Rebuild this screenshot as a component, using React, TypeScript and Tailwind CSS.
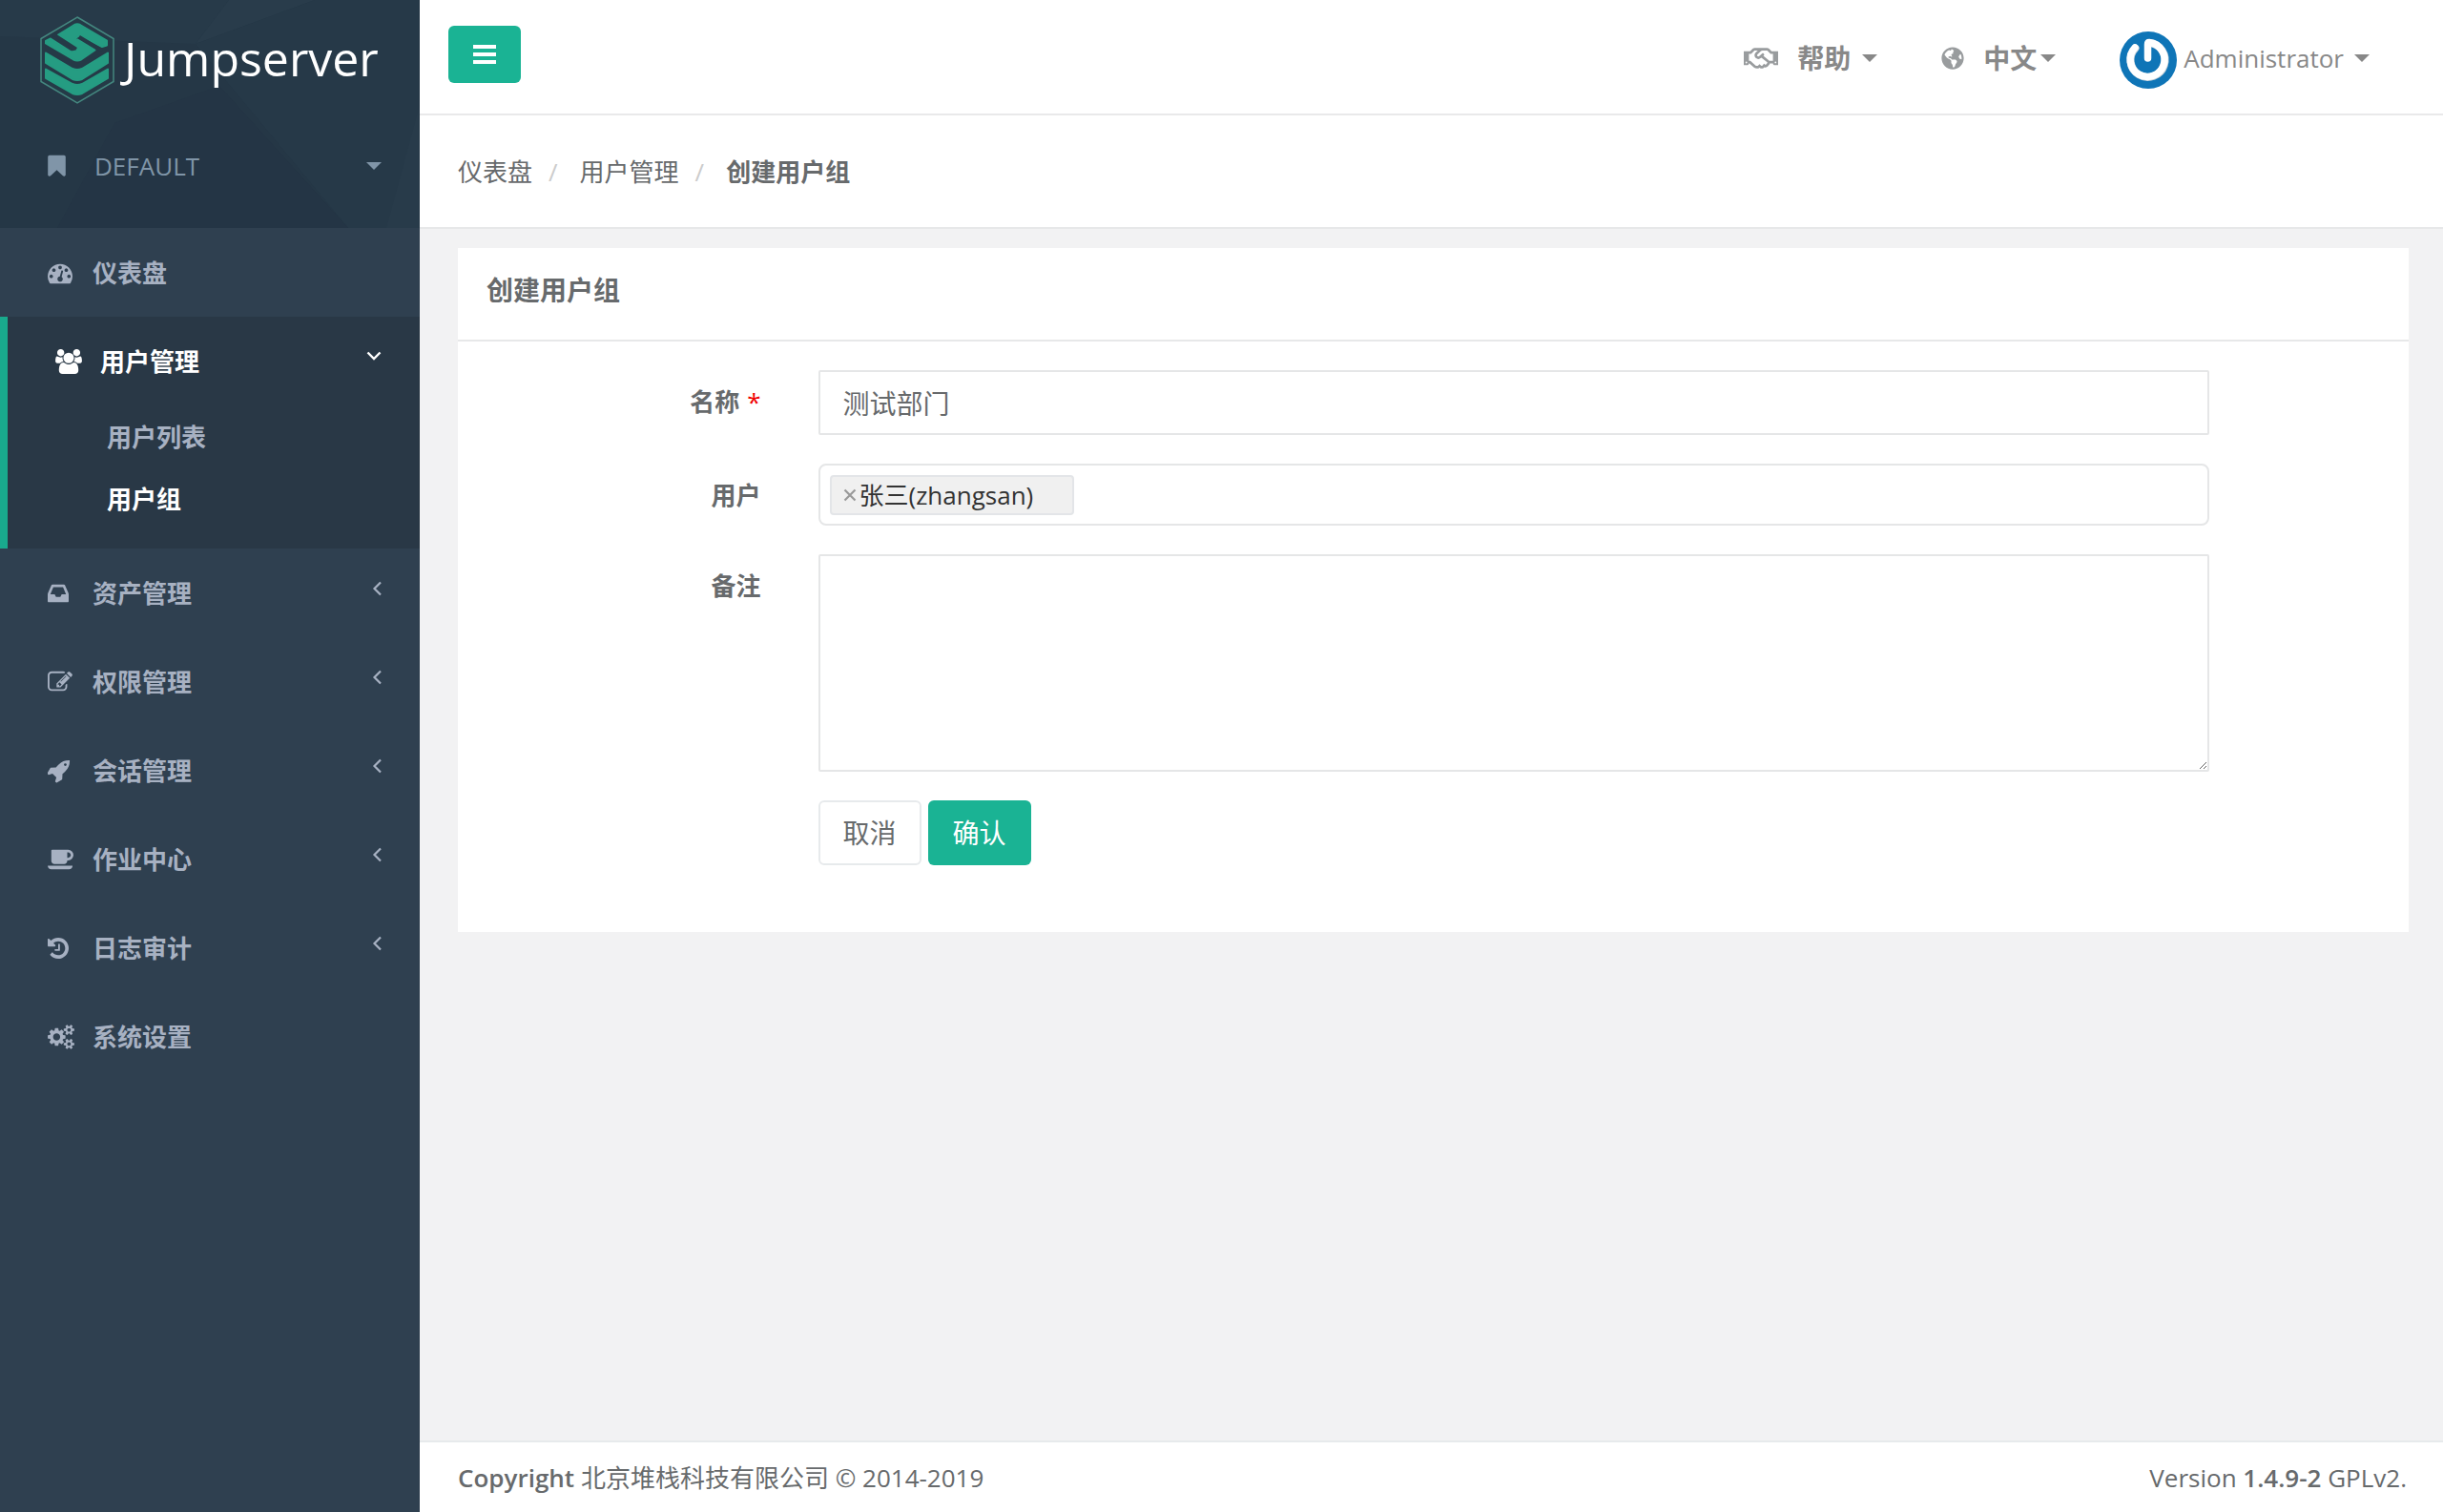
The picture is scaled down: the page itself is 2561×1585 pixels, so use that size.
import type { ReactNode } from "react";
import { FaGlobeAmericas, FaRegHandshake } from "react-icons/fa";

type Glyph = { box: string; width: string; d: string };

const bookmark: Glyph = {
  box: "256 0 1280 1792",
  width: "w-[19px]",
  d: "M1420 128q23 0 44 9 33 13 52.5 41t19.5 62v1289q0 34-19.5 62t-52.5 41q-19 8-44 8-48 0-83-32l-441-424-441 424q-36 33-83 33-23 0-44-9-33-13-52.5-41t-19.5-62v-1289q0-34 19.5-62t52.5-41q21-9 44-9h1048z",
};

const dashboard: Glyph = {
  box: "0 0 1792 1792",
  width: "w-[26px]",
  d: "M384 1152q0-53-37.5-90.5t-90.5-37.5-90.5 37.5-37.5 90.5 37.5 90.5 90.5 37.5 90.5-37.5 37.5-90.5zm192-448q0-53-37.5-90.5t-90.5-37.5-90.5 37.5-37.5 90.5 37.5 90.5 90.5 37.5 90.5-37.5 37.5-90.5zm428 481l101-382q6-26-7.5-48.5t-38.5-29.5-48 6.5-30 39.5l-101 382q-60 5-107 43.5t-63 98.5q-20 77 20 146t117 89 146-20 89-117q16-60-6-117t-72-91zm660-33q0-53-37.5-90.5t-90.5-37.5-90.5 37.5-37.5 90.5 37.5 90.5 90.5 37.5 90.5-37.5 37.5-90.5zm-640-640q0-53-37.5-90.5t-90.5-37.5-90.5 37.5-37.5 90.5 37.5 90.5 90.5 37.5 90.5-37.5 37.5-90.5zm448 192q0-53-37.5-90.5t-90.5-37.5-90.5 37.5-37.5 90.5 37.5 90.5 90.5 37.5 90.5-37.5 37.5-90.5zm320 448q0 261-141 483-19 29-54 29h-1402q-35 0-54-29-141-221-141-483 0-182 71-348t191-286 286-191 348-71 348 71 286 191 191 286 71 348z",
};

const users: Glyph = {
  box: "0 0 1920 1792",
  width: "w-7",
  d: "M593 896q-162 5-265 128h-134q-82 0-138-40.5t-56-118.5q0-353 124-353 6 0 43.5 21t97.5 42.5 119 21.5q67 0 133-23-5 37-5 66 0 139 81 256zm1071 637q0 120-73 189.5t-194 69.5h-874q-121 0-194-69.5t-73-189.5q0-53 3.5-103.5t14-109 26.5-108.5 43-97.5 62-81 85.5-53.5 111.5-20q10 0 43 21.5t73 48 107 48 135 21.5 135-21.5 107-48 73-48 43-21.5q61 0 111.5 20t85.5 53.5 62 81 43 97.5 26.5 108.5 14 109 3.5 103.5zm-1024-1277q0 106-75 181t-181 75-181-75-75-181 75-181 181-75 181 75 75 181zm704 384q0 159-112.5 271.5t-271.5 112.5-271.5-112.5-112.5-271.5 112.5-271.5 271.5-112.5 271.5 112.5 112.5 271.5zm576 225q0 78-56 118.5t-138 40.5h-134q-103-123-265-128 81-117 81-256 0-29-5-66 66 23 133 23 59 0 119-21.5t97.5-42.5 43.5-21q124 0 124 353zm-128-609q0 106-75 181t-181 75-181-75-75-181 75-181 181-75 181 75 75 181z",
};

const inbox: Glyph = {
  box: "128 0 1536 1792",
  width: "w-[22px]",
  d: "M1151 960h316q-1-3-2.5-8.5t-2.5-7.5l-212-496h-708l-212 496q-1 3-2.5 8.5t-2.5 7.5h316l95 192h320zm513 30v482q0 26-19 45t-45 19h-1408q-26 0-45-19t-19-45v-482q0-62 25-123l238-552q10-25 36.5-42t52.5-17h832q26 0 52.5 17t36.5 42l238 552q25 61 25 123z",
};

const edit: Glyph = {
  box: "0 0 1792 1792",
  width: "w-[26px]",
  d: "M888 1184l116-116-152-152-116 116v56h96v96h56zm440-720q-16-16-33 1l-350 350q-17 17-1 33t33-1l350-350q17-17 1-33zm80 594v190q0 119-84.5 203.5t-203.5 84.5h-832q-119 0-203.5-84.5t-84.5-203.5v-832q0-119 84.5-203.5t203.5-84.5h832q63 0 117 25 15 7 18 23 3 17-9 29l-49 49q-14 14-32 8-23-6-45-6h-832q-66 0-113 47t-47 113v832q0 66 47 113t113 47h832q66 0 113-47t47-113v-126q0-13 9-22l64-64q15-15 35-7t20 29zm-96-738l288 288-672 672h-288v-288zm444 132l-92 92-288-288 92-92q28-28 68-28t68 28l152 152q28 28 28 68t-28 68z",
};

const rocket: Glyph = {
  box: "64 0 1664 1792",
  width: "w-6",
  d: "M1440 448q0-40-28-68t-68-28-68 28-28 68 28 68 68 28 68-28 28-68zm224-288q0 249-75.5 430.5t-253.5 360.5q-81 80-195 176l-20 379q-2 16-16 26l-384 224q-7 4-16 4-12 0-23-9l-64-64q-13-14-8-32l85-276-281-281-276 85q-3 1-9 1-14 0-23-9l-64-64q-17-19-5-39l224-384q10-14 26-16l379-20q96-114 176-195 188-187 358-258t431-71q14 0 24 9.5t10 22.5z",
};

const coffee: Glyph = {
  box: "0 0 1920 1792",
  width: "w-7",
  d: "M1664 576q0-80-56-136t-136-56h-64v384h64q80 0 136-56t56-136zm-1664 768h1792q0 106-75 181t-181 75h-1280q-106 0-181-75t-75-181zm1856-768q0 159-112.5 271.5t-271.5 112.5h-64v32q0 92-66 158t-158 66h-704q-92 0-158-66t-66-158v-736q0-26 19-45t45-19h1152q159 0 271.5 112.5t112.5 271.5z",
};

const history: Glyph = {
  box: "128 0 1536 1792",
  width: "w-[22px]",
  d: "M1664 896q0 156-61 298t-164 245-245 164-298 61q-172 0-327-72.5t-264-204.5q-7-10-6.5-22.5t8.5-20.5l137-138q10-9 25-9 16 2 23 12 73 95 179 147t225 52q104 0 198.5-40.5t163.5-109.5 109.5-163.5 40.5-198.5-40.5-198.5-109.5-163.5-163.5-109.5-198.5-40.5q-98 0-188 35.5t-160 101.5l137 138q31 30 14 69-17 40-59 40h-448q-26 0-45-19t-19-45v-448q0-42 40-59 39-17 69 14l130 129q107-101 244.5-156.5t284.5-55.5q156 0 298 61t245 164 164 245 61 298zm-640-288v448q0 14-9 23t-23 9h-320q-14 0-23-9t-9-23v-64q0-14 9-23t23-9h224v-352q0-14 9-23t23-9h64q14 0 23 9t9 23z",
};

const smallCog =
  "v140q0 16-149 31-12 27-30 52 51 113 51 138 0 4-4 7-122 71-124 71-8 0-46-47t-52-68q-20 2-30 2t-30-2q-14 21-52 68t-46 47q-2 0-124-71-4-3-4-7 0-25 51-138-18-25-30-52-149-15-149-31v-140q0-16 149-31 13-29 30-52-51-113-51-138 0-4 4-7 4-2 35-20t59-34 30-16q8 0 46 46.5t52 67.5q20-2 30-2t30 2q51-71 92-112l6-2q4 0 124 70 4 3 4 7 0 25-51 138 17 23 30 52 149 15 149 31z";

const cogs: Glyph = {
  box: "0 0 1920 1792",
  width: "w-7",
  d:
    "M896 896q0-106-75-181t-181-75-181 75-75 181 75 181 181 75 181-75 75-181zm768 512q0-52-38-90t-90-38-90 38-38 90q0 53 37.5 90.5t90.5 37.5 90.5-37.5 37.5-90.5zm0-1024q0-52-38-90t-90-38-90 38-38 90q0 53 37.5 90.5t90.5 37.5 90.5-37.5 37.5-90.5zm-384 421v185q0 10-7 19.5t-16 10.5l-155 24q-11 35-32 76 34 48 90 115 7 11 7 20 0 12-7 19-23 30-82.5 89.5t-78.5 59.5q-11 0-21-7l-115-90q-37 19-77 31-11 108-23 155-7 24-30 24h-186q-11 0-20-7.5t-10-17.5l-23-153q-34-10-75-31l-118 89q-7 7-20 7-11 0-21-8-144-133-144-160 0-9 7-19 10-14 41-53t47-61q-23-44-35-82l-152-24q-10-1-17-9.5t-7-19.5v-185q0-10 7-19.5t16-10.5l155-24q11-35 32-76-34-48-90-115-7-11-7-20 0-12 7-20 22-30 82-89t79-59q11 0 21 7l115 90q34-18 77-32 11-108 23-154 7-24 30-24h186q11 0 20 7.5t10 17.5l23 153q34 10 75 31l118-89q8-7 20-7 11 0 21 8 144 133 144 160 0 8-7 19-12 16-42 54t-45 60q23 48 34 82l152 23q10 2 17 10.5t7 19.5z" +
    "M1920 1338" + smallCog +
    "M1920 314" + smallCog,
};

function Icon({ glyph }: { glyph: Glyph }) {
  return (
    <svg viewBox={glyph.box} className={`h-[26px] shrink-0 ${glyph.width}`} fill="currentColor" fillRule="evenodd" aria-hidden="true">
      <path d={glyph.d} />
    </svg>
  );
}

function Caret() {
  return (
    <svg viewBox="0 0 16 8" className="h-2 w-4 shrink-0" fill="currentColor" aria-hidden="true">
      <path d="M0 0h16L8 8z" />
    </svg>
  );
}

function Angle({ open }: { open?: boolean }) {
  return open ? (
    <svg viewBox="0 0 16 10" className="mb-3 h-[10px] w-4" fill="none" stroke="currentColor" strokeWidth="2.4" aria-hidden="true">
      <path d="M1.500 1.500 8 8l6.500-6.500" />
    </svg>
  ) : (
    <svg viewBox="0 0 10 16" className="mb-[10px] h-4 w-[10px]" fill="none" stroke="currentColor" strokeWidth="2.2" aria-hidden="true">
      <path d="M9 1.500 2.500 8l6.500 6.500" />
    </svg>
  );
}

function Logo() {
  return (
    <svg viewBox="0 0 78 92" className="h-[92px] w-[78px] shrink-0" aria-hidden="true">
      <path d="M39 1 77 23.500v45L39 91 1 68.500v-45z" fill="#253a47" stroke="#44877f" strokeWidth="1.500" />
      <g fill="#259c82" stroke="#259c82" strokeWidth="2" strokeLinejoin="round">
        <path d="M19 19.500 36 9q3-1.600 6 0l28 16.500v5l-5 1.500L42 20l-5 3 20.500 12.500L43 45.500q-4 2-8 0L6 28.500V26l5-2.500 21 13.500q3 1 6-1.500z" />
        <path d="M6 38.500 34 55q5 2 10 0l27-16.500V49L44 66q-5 2-10 0L6 49z" />
        <path d="M6 55.500 34 71q5 2 10 0l27-15.500V65L44 81q-5 2-10 0L6 65z" />
      </g>
      <path d="M14 19 38 34.500M41 21.500 65 36" fill="none" stroke="#253a47" strokeWidth="3.500" />
    </svg>
  );
}

function Avatar() {
  return (
    <svg viewBox="0 0 60 60" className="size-[60px] shrink-0" role="img" aria-label="Administrator">
      <circle cx="30" cy="30" r="30" fill="#0f75b7" />
      <g fill="none" strokeLinecap="round" strokeLinejoin="round">
        <path d="M16.500 17.500a18 18 0 1 0 15-5.500" stroke="#c9d3da" strokeWidth="8" />
        <path d="M16 17a18 18 0 1 0 15-5.500q-1.500 0-1.500 2V28" stroke="#fff" strokeWidth="7.500" />
      </g>
    </svg>
  );
}

type Item = { label: string; glyph: Glyph; children?: string[]; plain?: boolean };

const items: Item[] = [
  { label: "仪表盘", glyph: dashboard, plain: true },
  { label: "用户管理", glyph: users, children: ["用户列表", "用户组"] },
  { label: "资产管理", glyph: inbox },
  { label: "权限管理", glyph: edit },
  { label: "会话管理", glyph: rocket },
  { label: "作业中心", glyph: coffee },
  { label: "日志审计", glyph: history },
  { label: "系统设置", glyph: cogs, plain: true },
];

function NavItem({ item }: { item: Item }) {
  const active = Boolean(item.children);
  return (
    <li className={active ? "border-l-8 border-[#19aa8d] bg-[#293846] pb-5 text-white" : ""}>
      <a href="#" className="flex h-[93px] items-center pr-10 pl-[50px]">
        <span className="flex w-[47px] shrink-0">
          <Icon glyph={item.glyph} />
        </span>
        <span className="grow">{item.label}</span>
        {!item.plain && <Angle open={active} />}
      </a>
      {item.children && (
        <ul>
          {item.children.map((child, i) => (
            <li key={child}>
              <a href="#" className={`flex h-[65px] items-center pl-[104px] ${i === 1 ? "text-white" : "text-[#a7b1c2]"}`}>
                {child}
              </a>
            </li>
          ))}
        </ul>
      )}
    </li>
  );
}

function Sidebar() {
  return (
    <nav className="w-[440px] shrink-0 bg-[#2f4050] font-bold text-[#a7b1c2]">
      <div className="relative h-[239px] overflow-hidden bg-[#253746] font-normal">
        <svg viewBox="0 0 440 239" preserveAspectRatio="none" className="absolute inset-0 size-full" aria-hidden="true">
          <path d="M0 0h240l-35 46L0 38z" fill="#273a49" />
          <path d="M240 0h90L205 46z" fill="#293c4b" />
          <path d="M330 0h110v239h-75L205 46z" fill="#263948" />
          <path d="M230 90 365 239H60l60-110z" fill="#243545" />
          <path d="M440 110v129h-35z" fill="#283b4a" />
        </svg>
        <div className="relative flex items-center gap-[10px] pt-[17px] pl-[42px] text-white">
          <Logo />
          <span className="pb-1 text-[50px] leading-[60px]">Jumpserver</span>
        </div>
        <button type="button" className="relative mt-[46px] flex w-full items-center pr-10 pl-[50px] text-[#8095a8]">
          <span className="flex w-[49px]">
            <Icon glyph={bookmark} />
          </span>
          <span className="grow text-left">DEFAULT</span>
          <Caret />
        </button>
      </div>
      <ul>
        {items.map((item) => (
          <NavItem key={item.label} item={item} />
        ))}
      </ul>
    </nav>
  );
}

function TopBar() {
  return (
    <header className="flex h-[121px] items-start justify-between border-b-2 border-[#e9e9ea] pr-[77px] pl-[30px]">
      <button type="button" aria-label="菜单" className="mt-[27px] flex h-[60px] w-[76px] items-center justify-center rounded-md bg-[#1ab394] text-white">
        <svg viewBox="0 0 24 20" className="h-5 w-6" fill="currentColor" aria-hidden="true">
          <path d="M0 0h24v4H0zM0 8h24v4H0zM0 16h24v4H0z" />
        </svg>
      </button>
      <div className="mt-[33px] flex h-[60px] items-center text-[#888]">
        <button type="button" className="flex items-center pb-1 text-[28px] font-bold">
          <FaRegHandshake className="mr-5 size-9 text-[#999c9e]" />
          帮助
          <span className="ml-3">
            <Caret />
          </span>
        </button>
        <button type="button" className="ml-[67px] flex items-center pb-1 text-[28px] font-bold">
          <FaGlobeAmericas className="mr-5 size-6 text-[#999c9e]" />
          中文
          <span className="ml-1">
            <Caret />
          </span>
        </button>
        <button type="button" className="ml-[67px] flex items-center">
          <Avatar />
          <span className="flex items-center gap-[11px] pb-1 pl-[7px]">
            Administrator
            <Caret />
          </span>
        </button>
      </div>
    </header>
  );
}

function Breadcrumb() {
  return (
    <ol className="flex h-[119px] items-center border-b-2 border-[#e7e8e9] px-10 text-[#676a6c]">
      <li>
        <a href="#">仪表盘</a>
      </li>
      <li aria-hidden="true" className="mr-[23px] ml-[17px] text-[#ccc]">
        /
      </li>
      <li>
        <a href="#">用户管理</a>
      </li>
      <li aria-hidden="true" className="mr-[23px] ml-[17px] text-[#ccc]">
        /
      </li>
      <li className="font-bold">创建用户组</li>
    </ol>
  );
}

function Row({ label, id, required, children }: { label?: string; id?: string; required?: boolean; children: ReactNode }) {
  return (
    <div className="grid grid-cols-12">
      <div className="col-span-2 pt-[14px] pr-[30px] text-right leading-[38px] font-bold">
        {label && (
          <label htmlFor={id}>
            {label}
            {required && <span className="ml-2 font-normal text-[#f00000]">*</span>}
          </label>
        )}
      </div>
      <div className="col-span-9 px-[30px]">{children}</div>
    </div>
  );
}

function GroupForm() {
  return (
    <form className="flex flex-col gap-[30px] px-[10px] pt-[30px] pb-[70px]">
      <Row label="名称" id="name" required>
        <input id="name" type="text" defaultValue="测试部门" className="block h-[68px] w-full rounded-xs border-2 border-[#e5e6e7] bg-white px-6 text-[28px]" />
      </Row>
      <Row label="用户" id="users">
        <div className="flex h-[65px] items-center rounded-lg border-2 border-[#e5e6e7] px-[10px]">
          <span className="flex h-[42px] items-center rounded-sm border-2 border-[#e3e5e8] bg-[#f0f0f0] pr-[41px] pl-3 text-[#333]">
            <button type="button" aria-label="移除" className="mr-[3px] text-[#999]">
              <svg viewBox="0 0 14 14" className="size-[14px]" fill="none" stroke="currentColor" strokeWidth="2.200" aria-hidden="true">
                <path d="m1.500 1.500 11 11m0-11-11 11" />
              </svg>
            </button>
            张三(zhangsan)
          </span>
          <input id="users" type="text" className="ml-2 min-w-0 grow outline-none" />
        </div>
      </Row>
      <Row label="备注" id="comment">
        <textarea id="comment" className="block h-[228px] w-full rounded-xs border-2 border-[#e5e6e7] bg-white px-6 py-3 text-[28px]" />
      </Row>
      <Row>
        <div className="flex gap-[7px] text-[28px]">
          <button type="button" className="h-[68px] w-[108px] rounded-md border-2 border-[#e7eaec] bg-white">
            取消
          </button>
          <button type="submit" className="h-[68px] w-[108px] rounded-md bg-[#1ab394] text-white">
            确认
          </button>
        </div>
      </Row>
    </form>
  );
}

export default function App() {
  return (
    <div className="flex min-h-screen bg-[#f2f2f3] font-['Open_Sans','Noto_Sans_CJK_SC',sans-serif] text-[26px] leading-[38px] text-[#676a6c]">
      <Sidebar />
      <div className="flex min-w-0 grow flex-col">
        <div className="bg-white">
          <TopBar />
          <Breadcrumb />
        </div>
        <main className="grow pt-5 pr-9 pl-10">
          <section className="bg-white">
            <h1 className="flex h-[98px] items-center border-b-2 border-[#e7e8e9] px-[30px] pb-2 text-[28px] font-bold">创建用户组</h1>
            <GroupForm />
          </section>
        </main>
        <footer className="flex h-[75px] justify-between border-t-2 border-[#e7eaec] bg-white pt-[18px] pr-[38px] pl-10">
          <div>
            <strong className="font-semibold">Copyright</strong> 北京堆栈科技有限公司 © 2014-2019
          </div>
          <div>
            Version <strong className="font-semibold">1.4.9-2</strong> GPLv2.
          </div>
        </footer>
      </div>
    </div>
  );
}
